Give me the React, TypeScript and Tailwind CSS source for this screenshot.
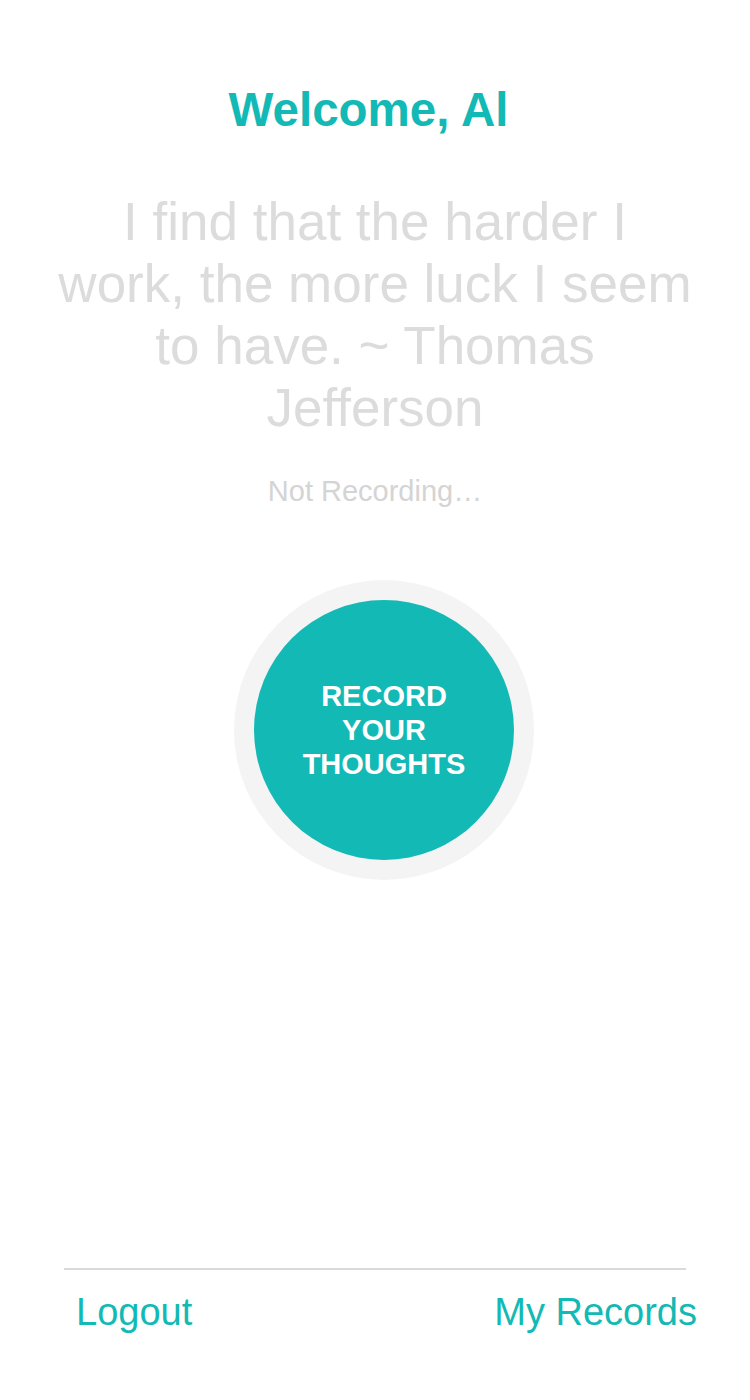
import React from "react";

export default function App() {
  return (
    <div
      className="min-h-screen h-[1400px] bg-white flex flex-col"
      style={{ fontFamily: '"Liberation Sans", Arial, sans-serif' }}
    >
      <div className="flex flex-col items-center pt-[82px]">
        <h1 className="mr-[13px] text-[47.5px] leading-[56px] font-bold text-[#13b9b5]">
          Welcome, Al
        </h1>
        <p className="mt-[53px] w-[640px] text-center text-[53px] leading-[62px] text-[#dcdcdc]">
          I find that the harder I work, the more luck I seem to have. ~ Thomas Jefferson
        </p>
        <p className="mt-[34px] text-[29px] leading-[36px] text-[#d4d4d4]">
          Not Recording…
        </p>
        <div className="mt-[71px] pl-[18px]">
          <div className="w-[300px] h-[300px] rounded-full bg-[#f4f4f4] flex items-center justify-center">
            <button className="w-[260px] h-[260px] rounded-full bg-[#13b9b5] flex items-center justify-center">
              <span className="text-white font-bold text-[29px] leading-[34px] text-center uppercase">
                Record
                <br />
                Your
                <br />
                Thoughts
              </span>
            </button>
          </div>
        </div>
      </div>
      <div className="mt-auto pb-[64px]">
        <div className="mx-16 h-[2px] bg-[#dadada]" />
        <div className="mt-[18px] flex justify-between pl-[76px] pr-[53px]">
          <a className="text-[38px] leading-[48px] text-[#13b9b5]">Logout</a>
          <a className="text-[38px] leading-[48px] text-[#13b9b5]">My Records</a>
        </div>
      </div>
    </div>
  );
}
